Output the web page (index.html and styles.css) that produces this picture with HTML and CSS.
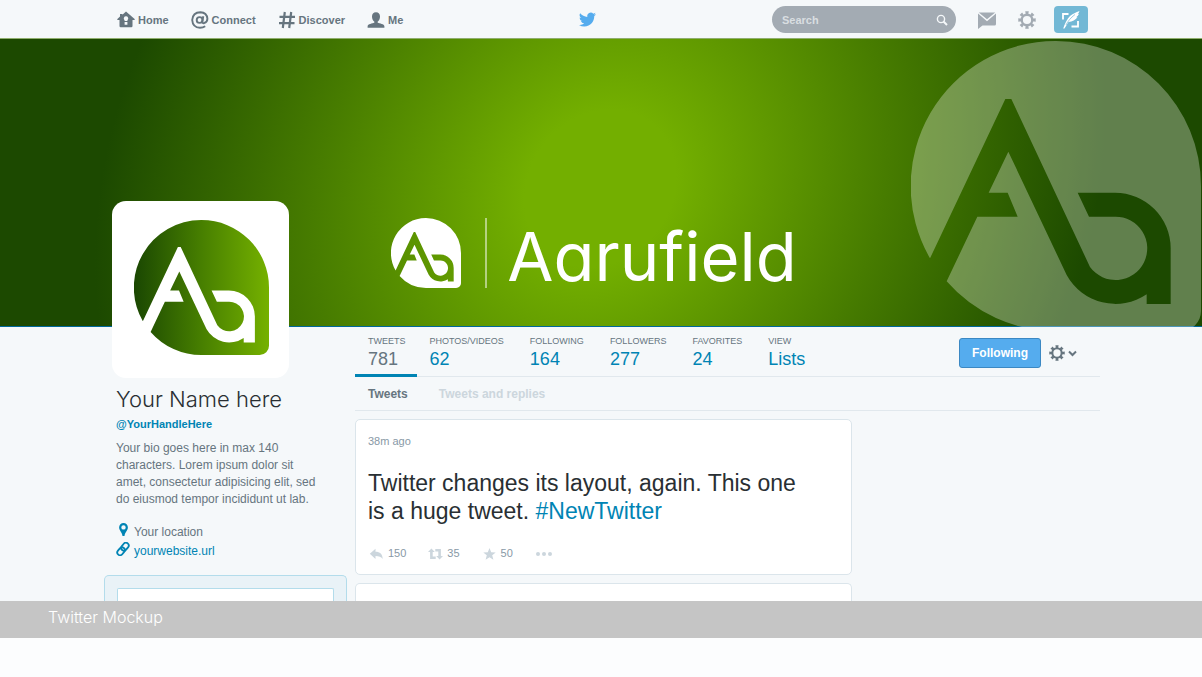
FILE: index.html
```html
<!DOCTYPE html>
<html lang="en">
<head>
<meta charset="utf-8">
<title>Twitter Mockup</title>
<link rel="stylesheet" href="styles.css">
</head>
<body>
<svg class="defs" aria-hidden="true">
  <symbol id="logo" viewBox="0 0 870 870"><path d="M57 652A435 435 0 0 1 435 0A435 435 0 0 1 870 435V810A60 60 0 0 1 810 870H435A435 435 0 0 1 107 721L199 527H320L290 455H233L292 332L467 702A167 167 0 0 0 707 760V789H779V622A167 167 0 0 0 612 455H500L534 527H612A95 95 0 1 1 537 678L301 174H283Z"/></symbol>
  <symbol id="gear" viewBox="0 0 18 18"><circle cx="9" cy="9" r="5.3" fill="none" stroke="currentColor" stroke-width="2.4"/><path d="M7.200.3h3.600L10.200 3.600H7.800zM7.200 17.700h3.600l-.6-3.300H7.800zM.3 7.200v3.600l3.300-.6V7.800zM17.700 7.200v3.600l-3.300-.6V7.800zM1.600 4.100l2.500-2.500 1.900 2.600-1.800 1.800zM16.400 4.100l-2.500-2.500-1.900 2.600 1.800 1.800zM1.600 13.900l2.500 2.500 1.900-2.600-1.800-1.800zM16.400 13.900l-2.500 2.500-1.900-2.600 1.800-1.800z"/></symbol>
</svg>
<div class="page">
  <header class="topbar">
    <nav class="nav" aria-label="Main">
      <a href="#" class="nav-link"><svg class="nav-icon" viewBox="0 0 18 18"><path fill-rule="evenodd" d="M9 .6 17.600 7.900q.6 1-.4 1.200H15.500V15q0 1.200-1.200 1.200H3.700Q2.500 16.200 2.500 15V9.100H.8Q-.2 8.900.4 7.900L3 5.600V3h2.400v.7zM9 5.300A2.200 2.200 0 0 0 7.600 9.200V10h2.800v-.8A2.200 2.200 0 0 0 9 5.300zM7.600 11v2.700h2.800V11z"/></svg>Home</a>
      <a href="#" class="nav-link"><svg class="nav-icon" viewBox="0 0 18 18"><g fill="none" stroke="currentColor" stroke-width="1.900"><circle cx="8.600" cy="9" r="2.900"/><path d="M12.300 5.200 11.300 10.500Q11.200 12.400 13 12.200 16.500 11 16.400 7.700 15.900 1.500 9.400 1.200 1.800 1.300 1.200 9q.5 7.500 7.800 7.800 3 0 5.200-1.500"/></g></svg>Connect</a>
      <a href="#" class="nav-link"><svg class="nav-icon" viewBox="0 0 18 18"><path d="M6.800 1 4.800 17M13.200 1 11.200 17M1.500 5.800h15.500M1 12.200h15.500" fill="none" stroke="currentColor" stroke-width="2.200"/></svg>Discover</a>
      <a href="#" class="nav-link"><svg class="nav-icon" viewBox="0 0 18 18"><path d="M9 1.200c2.700 0 4 1.700 4 4.300 0 2.200-.8 4.300-2.400 5.300v.8c2 1.200 6.800 1.400 6.800 3.700v1.500H.6v-1.500c0-2.300 4.800-2.500 6.800-3.700v-.8C5.800 9.800 5 7.700 5 5.500 5 2.900 6.300 1.200 9 1.200z"/></svg>Me</a>
    </nav>
    <a href="#" class="bird" aria-label="Twitter"><svg viewBox="0 0 24 20"><path d="M24 2.500a9.800 9.800 0 0 1-2.800.8A4.900 4.900 0 0 0 23.300.6a9.900 9.900 0 0 1-3.100 1.200 4.900 4.900 0 0 0-8.400 4.500A14 14 0 0 1 1.700 1.200a4.900 4.900 0 0 0 1.500 6.600A4.900 4.900 0 0 1 1 7.200a4.900 4.900 0 0 0 3.900 4.900 4.900 4.900 0 0 1-2.200.1 4.900 4.900 0 0 0 4.600 3.400A9.900 9.900 0 0 1 0 17.600a13.900 13.900 0 0 0 7.500 2.200c9.200 0 14.300-7.700 14-14.700A10 10 0 0 0 24 2.500z"/></svg></a>
    <div class="tools">
      <form class="search" role="search">
        <input class="search-input" type="text" placeholder="Search" aria-label="Search">
        <button class="search-button" type="button" aria-label="Submit search"><svg viewBox="0 0 12 12"><circle cx="5" cy="5" r="3.600" fill="none" stroke="currentColor" stroke-width="1.400"/><path d="m7.500 7.500 3.500 3.500" stroke="currentColor" stroke-width="1.900"/></svg></button>
      </form>
      <button class="tool" type="button" aria-label="Messages"><svg viewBox="0 0 18 18"><path d="M.8 1.500h16.400L9 8.300zM0 2.600l9 7.700 9-7.700V13q0 1.500-1.500 1.500H4.500L0 18z"/></svg></button>
      <button class="tool" type="button" aria-label="Settings"><svg><use href="#gear"/></svg></button>
      <button class="compose" type="button" aria-label="Compose"><svg viewBox="0 0 20 18"><path d="M7.500 3H2v5.500M10.500 15.500H17V10" fill="none" stroke="currentColor" stroke-width="1.800"/><path d="M2.200 17.500C4 12 6 8.300 9 5c2.500-2.500 6-3.500 9.500-5-.3 1.300-1 2.200-1.800 3l1.300-.3c-.6 1.500-1.600 2.700-2.800 3.600l1.300-.1c-2 2.700-5 4.300-9 4.900L3.500 17.500z"/><path d="M14 3.500C9.500 7 7 10 5 14" fill="none" stroke="#72b8d5" stroke-width=".7"/></svg></button>
    </div>
  </header>

  <section class="banner">
    <svg class="watermark" aria-hidden="true"><use href="#logo"/></svg>
    <div class="brand">
      <svg class="brand-logo" aria-hidden="true"><use href="#logo"/></svg>
      <span class="brand-rule"></span>
      <span class="brand-name">Aarufield</span>
    </div>
  </section>

  <div class="profile">
    <aside class="sidebar">
      <div class="avatar">
        <svg viewBox="0 0 870 870" role="img" aria-label="Aarufield logo"><defs><linearGradient id="leaf"><stop offset="0" stop-color="#1a4702"/><stop offset=".5" stop-color="#477f00"/><stop offset="1" stop-color="#75b100"/></linearGradient></defs><path fill="url(#leaf)" d="M57 652A435 435 0 0 1 435 0A435 435 0 0 1 870 435V810A60 60 0 0 1 810 870H435A435 435 0 0 1 107 721L199 527H320L290 455H233L292 332L467 702A167 167 0 0 0 707 760V789H779V622A167 167 0 0 0 612 455H500L534 527H612A95 95 0 1 1 537 678L301 174H283Z"/></svg>
      </div>
      <div class="about">
        <h1 class="name">Your Name here</h1>
        <a href="#" class="handle">@YourHandleHere</a>
        <p class="bio">Your bio goes here in max 140 characters. Lorem ipsum dolor sit amet, consectetur adipisicing elit, sed do eiusmod tempor incididunt ut lab.</p>
        <p class="detail"><svg viewBox="0 0 14 14"><path fill-rule="evenodd" d="M7.500 0a4.400 4.400 0 0 1 4.400 4.400C11.900 7.500 8.800 9 8.500 13h-2C6.200 9 3.100 7.500 3.100 4.400A4.400 4.400 0 0 1 7.500 0zm0 2.200a2.200 2.200 0 1 0 0 4.400 2.200 2.200 0 0 0 0-4.400z"/></svg><span>Your location</span></p>
        <p class="detail"><svg viewBox="0 0 14 14"><g fill="none" stroke="currentColor" stroke-width="1.800" transform="rotate(-50 7 7)"><rect x="-.3" y="4.200" width="8.600" height="5.600" rx="2.800"/><rect x="5.700" y="4.200" width="8.600" height="5.600" rx="2.800"/></g></svg><a href="#">yourwebsite.url</a></p>
      </div>
      <div class="tweet-box"><div class="tweet-box-field"></div></div>
    </aside>

    <main class="main">
      <div class="stats">
        <a href="#" class="stat stat-current"><span class="stat-label">TWEETS</span><span class="stat-value">781</span></a>
        <a href="#" class="stat"><span class="stat-label">PHOTOS/VIDEOS</span><span class="stat-value">62</span></a>
        <a href="#" class="stat"><span class="stat-label">FOLLOWING</span><span class="stat-value">164</span></a>
        <a href="#" class="stat"><span class="stat-label">FOLLOWERS</span><span class="stat-value">277</span></a>
        <a href="#" class="stat"><span class="stat-label">FAVORITES</span><span class="stat-value">24</span></a>
        <a href="#" class="stat"><span class="stat-label">VIEW</span><span class="stat-value">Lists</span></a>
        <div class="actions">
          <button class="follow" type="button">Following</button>
          <button class="options" type="button" aria-label="User options"><svg class="options-gear"><use href="#gear"/></svg><svg class="options-arrow" viewBox="0 0 9 7"><path d="m1 1.500 3.500 3.500L8 1.500" fill="none" stroke="currentColor" stroke-width="2"/></svg></button>
        </div>
      </div>
      <nav class="tabs" aria-label="Timeline">
        <a href="#" class="tab tab-current">Tweets</a>
        <a href="#" class="tab">Tweets and replies</a>
      </nav>
      <article class="card">
        <p class="time">38m ago</p>
        <p class="tweet">Twitter changes its layout, again. This one is a huge tweet. <a href="#">#NewTwitter</a></p>
        <div class="reactions">
          <button class="reaction" type="button" aria-label="Reply, 150"><svg viewBox="0 0 15 12"><path d="M6.500.8v3c4.500 0 7 2.200 7.200 7.200C12 8.600 10 7.900 6.500 7.900v3L.8 5.800z"/></svg>150</button>
          <button class="reaction" type="button" aria-label="Retweet, 35"><svg viewBox="0 0 15 12"><path d="M3.400.5 6.800 4H4.700v4.500h3V11H2.100V4H0zM11.600 11.500 8.200 8h2.100V3.500h-3V1h5.600v7H15z"/></svg>35</button>
          <button class="reaction" type="button" aria-label="Favorite, 50"><svg viewBox="0 0 15 12"><path d="m7.500 0 1.700 4.200 4.500.2-3.500 2.800 1.200 4.500-3.900-2.500-3.900 2.500 1.200-4.500L1.300 4.400l4.500-.2z"/></svg>50</button>
          <button class="reaction more" type="button" aria-label="More"><svg viewBox="0 0 18 12"><circle cx="3" cy="6" r="2"/><circle cx="9" cy="6" r="2"/><circle cx="15" cy="6" r="2"/></svg></button>
        </div>
      </article>
      <div class="card card-next"></div>
    </main>
  </div>
  <footer class="caption">Twitter Mockup</footer>
</div>
</body>
</html>
```
FILE: styles.css
```css
* {
  box-sizing: border-box;
}

body {
  margin: 0;
  background: #fcfdfe;
  color: #66757f;
  font-family: "Liberation Sans", Arial, sans-serif;
}

a {
  color: #0084b4;
  text-decoration: none;
}

p,
h1 {
  margin: 0;
}

button {
  padding: 0;
  border: 0;
  background: none;
  color: inherit;
  font: inherit;
}

svg {
  display: block;
  fill: currentColor;
}

.defs {
  position: absolute;
  width: 0;
  height: 0;
}

.page {
  display: flex;
  flex-direction: column;
  min-height: 100vh;
  padding-bottom: 39px;
}

/* Top bar */
.topbar {
  display: flex;
  align-items: center;
  justify-content: space-between;
  height: 39px;
  padding: 1px 114px 0 117px;
  background: #f5f8fa;
  border-bottom: 1px solid #8fae6d;
}

.nav {
  display: flex;
  gap: 22px;
}

.nav-link {
  display: flex;
  align-items: center;
  gap: 3px;
  color: #66757f;
  font-size: 11px;
  font-weight: bold;
  line-height: 18px;
}

.nav-icon {
  width: 18px;
  height: 18px;
}

.bird {
  color: #55acee;
}

.bird svg {
  width: 17px;
  height: 15px;
}

.tools {
  display: flex;
  align-items: center;
  gap: 22px;
}

.search {
  display: flex;
  align-items: center;
  width: 184px;
  height: 27px;
  padding: 1px 8px 0 10px;
  border-radius: 14px;
  background: #a3abb3;
}

.search-input {
  flex: 1;
  min-width: 0;
  padding: 0;
  border: 0;
  background: none;
  color: #ffffff;
  font: bold 11px "Liberation Sans", Arial, sans-serif;
}

.search-input::placeholder {
  color: #d9dee1;
}

.search-button {
  color: #f5f8fa;
}

.search-button svg {
  width: 12px;
  height: 12px;
}

.tool {
  color: #a3abb3;
}

.tool svg {
  width: 18px;
  height: 18px;
}

.compose {
  display: grid;
  place-items: center;
  width: 34px;
  height: 27px;
  margin-left: -4px;
  border-radius: 4px;
  background: #72b8d5;
  color: #ffffff;
}

.compose svg {
  width: 20px;
  height: 18px;
}

/* Banner */
.banner {
  position: relative;
  isolation: isolate;
  display: flex;
  align-items: flex-end;
  justify-content: center;
  height: 288px;
  padding: 0 14px 39px 0;
  overflow: hidden;
  background: #00689a;
}

.banner::before {
  content: "";
  position: absolute;
  z-index: -1;
  inset: 0 -40px 1px;
  background: radial-gradient(ellipse 39% 182% at 50% 52%, #73af00 15%, #477c00 57%, #1c4900 100%);
  transform: skewX(-8deg);
}

.watermark {
  position: absolute;
  top: 2px;
  right: 1px;
  width: 290px;
  height: 290px;
  color: #ffffff;
  opacity: 0.3;
}

.brand {
  display: flex;
  align-items: center;
  color: #ffffff;
}

.brand-logo {
  width: 70px;
  height: 70px;
}

.brand-rule {
  width: 2px;
  height: 70px;
  margin: 0 20px 0 24px;
  background: #ffffff;
  opacity: 0.5;
}

.brand-name {
  padding-top: 8px;
  font: 400 67px/62px Inter, "Liberation Sans", sans-serif;
  font-feature-settings: "cv11";
}

/* Profile */
.profile {
  display: grid;
  grid-template-columns: 243px minmax(0, 1fr);
  gap: 8px;
  flex: 1;
  padding: 0 102px 0 104px;
  background: #f5f8fa;
}

.sidebar,
.main {
  display: flex;
  flex-direction: column;
}

.avatar {
  position: relative;
  width: 177px;
  height: 177px;
  margin: -126px 0 0 8px;
  padding: 19px 20px 0 22px;
  border-radius: 14px;
  background: #ffffff;
}

.avatar svg {
  width: 135px;
  height: 135px;
}

.about {
  padding: 5px 24px 14px 12px;
}

.name {
  color: #292f33;
  font: 300 22px/32px Inter, "Liberation Sans", sans-serif;
}

.handle {
  display: block;
  font-size: 11px;
  font-weight: bold;
  line-height: 18px;
}

.bio {
  margin: 7px 0 15px;
  font-size: 12px;
  line-height: 17px;
}

.detail {
  display: flex;
  align-items: flex-start;
  gap: 4px;
  font-size: 12px;
  line-height: 19px;
}

.detail svg {
  width: 14px;
  height: 14px;
  color: #0084b4;
}

.tweet-box {
  display: flex;
  flex: 1;
  padding: 12px 12px 0;
  border: 1px solid #b3dceb;
  border-bottom: 0;
  border-radius: 5px 5px 0 0;
  background: #e9f2f7;
}

.tweet-box-field {
  flex: 1;
  border: 1px solid #b3dceb;
  border-bottom: 0;
  border-radius: 2px 2px 0 0;
  background: #ffffff;
}

/* Stats */
.stats {
  display: flex;
  height: 50px;
  border-bottom: 1px solid #e1e8ed;
}

.stat {
  display: flex;
  flex-direction: column;
  height: 50px;
  padding: 8px 13px 0;
}

.stat-current {
  padding-right: 11px;
  border-bottom: 3px solid #0084b4;
}

.stat-label {
  color: #66757f;
  font-size: 9px;
  line-height: 12px;
}

.stat-value {
  font-size: 18px;
  line-height: 24px;
}

.stat-current .stat-value {
  color: #66757f;
}

.actions {
  display: flex;
  align-items: center;
  gap: 8px;
  margin-left: auto;
  padding: 3px 23px 0 0;
}

.follow {
  height: 30px;
  padding: 0 12px;
  border: 1px solid #3b88c3;
  border-radius: 3px;
  background: #55acee;
  color: #ffffff;
  font-size: 12px;
  font-weight: bold;
}

.options {
  display: flex;
  align-items: center;
  gap: 3px;
}

.options-gear {
  width: 16px;
  height: 16px;
}

.options-arrow {
  width: 9px;
  height: 7px;
}

.tabs {
  display: flex;
  gap: 31px;
  padding: 2px 0 0 13px;
  border-bottom: 1px solid #e1e8ed;
  font-size: 12px;
  font-weight: bold;
  line-height: 31px;
}

.tab {
  color: #ccd6dd;
}

.tab-current {
  color: #66757f;
}

/* Tweets */
.card {
  max-width: 497px;
  margin-top: 8px;
  padding: 12px;
  border: 1px solid #dbe5eb;
  border-radius: 5px;
  background: #ffffff;
}

.card-next {
  flex: 1;
  width: 100%;
  padding: 0;
  border-bottom: 0;
  border-radius: 5px 5px 0 0;
}

.time {
  color: #8899a6;
  font-size: 11px;
  line-height: 18px;
}

.tweet {
  margin: 19px 0 20px;
  padding-right: 32px;
  color: #292f33;
  font-size: 23px;
  line-height: 28px;
}

.reactions {
  display: flex;
  gap: 22px;
  padding-left: 1px;
}

.reaction {
  display: flex;
  align-items: center;
  gap: 4px;
  color: #8899a6;
  font-size: 11px;
  line-height: 17px;
}

.reaction svg {
  width: 15px;
  height: 12px;
  color: #ccd6dd;
}

.more svg {
  width: 18px;
}

/* Caption strip */
.caption {
  padding: 0 48px 4px;
  background: #c5c5c5;
  color: #ffffff;
  font: 300 16px/33px Inter, "Liberation Sans", sans-serif;
  font-feature-settings: "cv11";
}
```
